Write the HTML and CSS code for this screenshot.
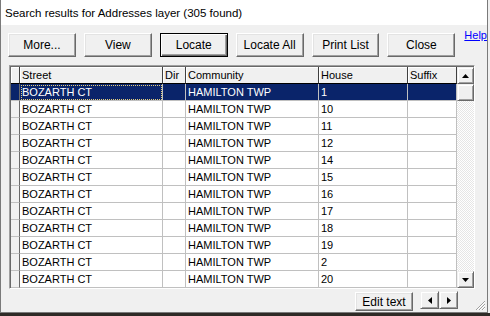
FILE: index.html
```html
<!DOCTYPE html>
<html>
<head>
  <title>Search results</title>
  <link rel="stylesheet" href="styles.css">
</head>
<body>
  <div class="window">
    <div class="titlebar">Search results for Addresses layer (305 found)</div>
    <div class="content">
      <div class="toolbar">
        <button class="btn">More...</button>
        <button class="btn">View</button>
        <button class="btn default">Locate</button>
        <button class="btn">Locate All</button>
        <button class="btn">Print List</button>
        <button class="btn">Close</button>
        <a class="help" href="#">Help</a>
      </div>

      <div class="grid">
        <div class="rows">
          <div class="row head">
            <div class="cell ind"></div>
            <div class="cell">Street</div>
            <div class="cell">Dir</div>
            <div class="cell">Community</div>
            <div class="cell">House</div>
            <div class="cell">Suffix</div>
          </div>
          <div class="row selected">
            <div class="cell ind"></div>
            <div class="cell focus">BOZARTH CT</div>
            <div class="cell"></div>
            <div class="cell">HAMILTON TWP</div>
            <div class="cell">1</div>
            <div class="cell"></div>
          </div>
          <div class="row"><div class="cell ind"></div><div class="cell">BOZARTH CT</div><div class="cell"></div><div class="cell">HAMILTON TWP</div><div class="cell">10</div><div class="cell"></div></div>
          <div class="row"><div class="cell ind"></div><div class="cell">BOZARTH CT</div><div class="cell"></div><div class="cell">HAMILTON TWP</div><div class="cell">11</div><div class="cell"></div></div>
          <div class="row"><div class="cell ind"></div><div class="cell">BOZARTH CT</div><div class="cell"></div><div class="cell">HAMILTON TWP</div><div class="cell">12</div><div class="cell"></div></div>
          <div class="row"><div class="cell ind"></div><div class="cell">BOZARTH CT</div><div class="cell"></div><div class="cell">HAMILTON TWP</div><div class="cell">14</div><div class="cell"></div></div>
          <div class="row"><div class="cell ind"></div><div class="cell">BOZARTH CT</div><div class="cell"></div><div class="cell">HAMILTON TWP</div><div class="cell">15</div><div class="cell"></div></div>
          <div class="row"><div class="cell ind"></div><div class="cell">BOZARTH CT</div><div class="cell"></div><div class="cell">HAMILTON TWP</div><div class="cell">16</div><div class="cell"></div></div>
          <div class="row"><div class="cell ind"></div><div class="cell">BOZARTH CT</div><div class="cell"></div><div class="cell">HAMILTON TWP</div><div class="cell">17</div><div class="cell"></div></div>
          <div class="row"><div class="cell ind"></div><div class="cell">BOZARTH CT</div><div class="cell"></div><div class="cell">HAMILTON TWP</div><div class="cell">18</div><div class="cell"></div></div>
          <div class="row"><div class="cell ind"></div><div class="cell">BOZARTH CT</div><div class="cell"></div><div class="cell">HAMILTON TWP</div><div class="cell">19</div><div class="cell"></div></div>
          <div class="row"><div class="cell ind"></div><div class="cell">BOZARTH CT</div><div class="cell"></div><div class="cell">HAMILTON TWP</div><div class="cell">2</div><div class="cell"></div></div>
          <div class="row"><div class="cell ind"></div><div class="cell">BOZARTH CT</div><div class="cell"></div><div class="cell">HAMILTON TWP</div><div class="cell">20</div><div class="cell"></div></div>
        </div>

        <div class="vscroll">
          <div class="sbtn">
            <svg width="7" height="4" viewBox="0 0 7 4"><polygon points="3.5,0 7,4 0,4" fill="#000"/></svg>
          </div>
          <div class="thumb"></div>
          <div class="track"></div>
          <div class="sbtn">
            <svg width="7" height="4" viewBox="0 0 7 4"><polygon points="0,0 7,0 3.5,4" fill="#000"/></svg>
          </div>
        </div>
      </div>

      <div class="footer">
        <button class="btn edit">Edit text</button>
        <div class="arrows">
          <div class="abtn">
            <svg width="4" height="7" viewBox="0 0 4 7"><polygon points="4,0 4,7 0,3.5" fill="#000"/></svg>
          </div>
          <div class="abtn">
            <svg width="4" height="7" viewBox="0 0 4 7"><polygon points="0,0 4,3.5 0,7" fill="#000"/></svg>
          </div>
        </div>
      </div>
    </div>

    <!-- size grip in the corner -->
    <svg class="grip" width="11" height="11" viewBox="0 0 11 11">
      <path d="M10 1 L1 10 M10 4 L4 10 M10 7 L7 10" stroke="#a0a0a0" stroke-width="1"/>
      <path d="M10 2 L2 10 M10 5 L5 10 M10 8 L8 10" stroke="#ffffff" stroke-width="1"/>
    </svg>
  </div>
  <div class="behind"></div>
</body>
</html>
```

FILE: styles.css
```css
body {
    margin: 0;
    background: #f0f0f0;
    font-family: "Liberation Sans", Arial, sans-serif;
    font-size: 11px;
    color: #000;
}
.window {
    position: relative;
    box-sizing: border-box;
    width: 488px;
    height: 313px;
    border-left: 1px solid #7a7a7a;
    border-right: 1px solid #7a7a7a;
    border-bottom: 1px solid #7a7a7a;
    background: #f0f0f0;
}
.titlebar {
    height: 25px;
    line-height: 26px;
    padding-left: 4px;
    background: #fff;
    font-size: 11.5px;
}
.content {
    padding-left: 7px;
}
.toolbar {
    display: flex;
    align-items: flex-start;
    gap: 8px;
    margin-top: 8px;
}
.btn {
    box-sizing: border-box;
    width: 68px;
    height: 24px;
    padding: 0;
    margin: 0;
    background: #f0f0f0;
    font-family: "Liberation Sans", Arial, sans-serif;
    font-size: 12px;
    color: #000;
    border: 1px solid;
    border-color: #fff #696969 #696969 #fff;
    box-shadow: inset -1px -1px 0 #a0a0a0, inset 1px 1px 0 #e3e3e3;
}
.btn.default {
    border-color: #000;
    box-shadow: inset 1px 1px 0 #fff, inset -1px -1px 0 #696969, inset -2px -2px 0 #a0a0a0;
}
.help {
    margin-left: 1px;
    margin-top: -4px;
    color: #0000ff;
    font-size: 11px;
}
.grid {
    display: flex;
    width: 464px;
    margin-top: 8px;
    margin-left: 1px;
    border: 1px solid;
    border-color: #a0a0a0 #fff #fff #a0a0a0;
    box-shadow: inset 1px 1px 0 #696969;
    background: #fff;
}
.rows {
    width: 447px;
    padding-top: 1px;
    padding-left: 1px;
    box-sizing: border-box;
}
.row {
    display: grid;
    grid-template-columns: 9px 143px 23px 133px 89px 49px;
    height: 17px;
}
.cell {
    box-sizing: border-box;
    padding-left: 2px;
    line-height: 16px;
    border-right: 1px solid #c0c0c0;
    border-bottom: 1px solid #c0c0c0;
    white-space: nowrap;
    overflow: hidden;
}
.cell.ind {
    background: #f0f0f0;
    border-right-color: #696969;
}
.row.head {
    height: 17px;
}
.head .cell {
    background: #f0f0f0;
    border-right-color: #404040;
    border-bottom-color: #000;
    box-shadow: inset 1px 1px 0 #fff;
}
.selected .cell {
    background: #0a246a;
    color: #fff;
}
.selected .focus {
    outline: 1px dotted #e6cf7a;
    outline-offset: -2px;
}
.vscroll {
    display: flex;
    flex-direction: column;
    width: 17px;
    padding-top: 1px;
}
.sbtn, .thumb, .abtn {
    box-sizing: border-box;
    display: flex;
    align-items: center;
    justify-content: center;
    background: #f0f0f0;
    border: 1px solid;
    border-color: #f0f0f0 #696969 #696969 #f0f0f0;
    box-shadow: inset 1px 1px 0 #fff, inset -1px -1px 0 #a0a0a0;
}
.sbtn {
    height: 17px;
}
.thumb {
    height: 17px;
}
.track {
    flex: 1;
    background-image: repeating-conic-gradient(#fff 0 25%, #e6e6e6 0 50%);
    background-size: 2px 2px;
}
.footer {
    display: flex;
    justify-content: flex-end;
    align-items: flex-start;
    gap: 7px;
    width: 450px;
    margin-top: 3px;
}
.btn.edit {
    width: 58px;
    height: 19px;
    font-size: 12px;
}
.arrows {
    display: flex;
    margin-top: -1px;
}
.abtn {
    width: 19px;
    height: 18px;
}
.grip {
    position: absolute;
    right: 1px;
    bottom: 1px;
}
.behind {
    height: 3px;
    background: #2e2a26;
}
```
